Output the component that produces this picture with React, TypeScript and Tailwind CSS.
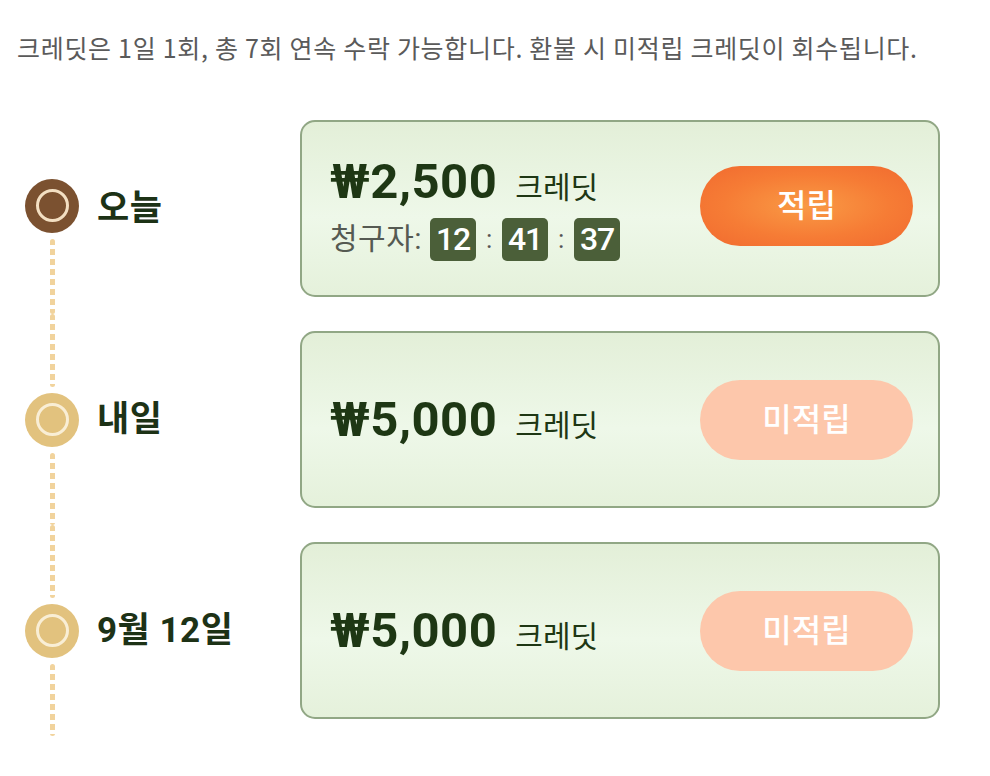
import React from "react";

const FONT = "font-['Roboto','Noto_Sans_CJK_KR',sans-serif]";

function Dots({ className = "" }: { className?: string }) {
  return (
    <div
      className={`w-[5px] flex-1 bg-[repeating-linear-gradient(to_bottom,#f1d39c_0px,#f1d39c_6px,transparent_6px,transparent_10px)] rounded-full ${className}`}
    />
  );
}

function Node({ active }: { active: boolean }) {
  return (
    <div
      className={`w-[54px] h-[54px] rounded-full flex items-center justify-center shrink-0 ${
        active ? "bg-[#7b5130]" : "bg-[#e2c27e]"
      }`}
    >
      <div
        className={`w-[33px] h-[33px] rounded-full border-[3px] ${
          active ? "border-[#f3dfc2]" : "border-[#f9eed5]"
        }`}
      />
    </div>
  );
}

function TimeBox({ v }: { v: string }) {
  return (
    <div className="w-[46px] h-[43px] rounded-[5px] bg-[#4b5f39] text-white text-[32px] leading-none font-medium tracking-[-1px] flex items-center justify-center">
      {v}
    </div>
  );
}

type Row = { label: string; amount: string; active: boolean; first?: boolean };

function RowItem({ r }: { r: Row }) {
  return (
    <div className="flex items-stretch">
      <div className="w-[300px] flex">
        <div className="w-[104px] flex flex-col items-center">
          {r.first ? <div className="flex-1" /> : <Dots className="mb-[6px]" />}
          <Node active={r.active} />
          <Dots className="mt-[6px]" />
        </div>
        <div className="flex items-center -ml-[7px]">
          <span className="text-[35px] font-bold text-[#1d3216] leading-none tracking-[0.5px]">{r.label}</span>
        </div>
      </div>
      <div className="py-[17px]">
        <div className="w-[640px] h-[177px] rounded-[15px] border-2 border-[#91a785] bg-[linear-gradient(to_bottom,#e3efd8_0%,#eef8e9_55%,#e5f1db_100%)] flex items-center justify-between pl-[28px] pr-[25px]">
          <div className="flex flex-col">
            <div className="flex items-baseline">
              <span className="text-[49px] font-bold text-[#1e3714] leading-none tracking-[0.5px]">
                ₩{r.amount}
              </span>
              <span className="ml-[18px] text-[30px] text-[#1e3714] leading-none">크레딧</span>
            </div>
            {r.active && (
              <div className="flex items-center mt-[12px]">
                <span className="text-[30px] text-[#555a52] leading-none mr-[8px] tracking-[0.5px]">청구자:</span>
                <TimeBox v="12" />
                <span className="text-[26px] text-[#555] w-[26px] text-center leading-none">:</span>
                <TimeBox v="41" />
                <span className="text-[26px] text-[#555] w-[26px] text-center leading-none">:</span>
                <TimeBox v="37" />
              </div>
            )}
          </div>
          <div
            className={`w-[213px] h-[80px] rounded-full flex items-center justify-center text-white text-[32px] font-medium ${
              r.active
                ? "bg-[radial-gradient(ellipse_at_center,#f99a45_0%,#f67c35_55%,#f16a2f_100%)] -mt-[6px]"
                : "bg-[#fdc7ab]"
            }`}
          >
            {r.active ? "적립" : "미적립"}
          </div>
        </div>
      </div>
    </div>
  );
}

export default function App() {
  const rows: Row[] = [
    { label: "오늘", amount: "2,500", active: true, first: true },
    { label: "내일", amount: "5,000", active: false },
    { label: "9월 12일", amount: "5,000", active: false },
  ];
  return (
    <div className={`w-[990px] h-[776px] bg-white ${FONT}`}>
      <div className="pt-[31px] pl-[17px] h-[103px]">
        <p className="text-[25px] leading-[32px] text-[#5a5a5a] font-['Noto_Sans_CJK_KR',sans-serif] tracking-[0.7px] whitespace-nowrap">
          크레딧은 1일 1회, 총 7회 연속 수락 가능합니다. 환불 시 미적립 크레딧이 회수됩니다.
        </p>
      </div>
      <div className="flex flex-col">
        {rows.map((r, i) => (
          <RowItem key={i} r={r} />
        ))}
      </div>
    </div>
  );
}
